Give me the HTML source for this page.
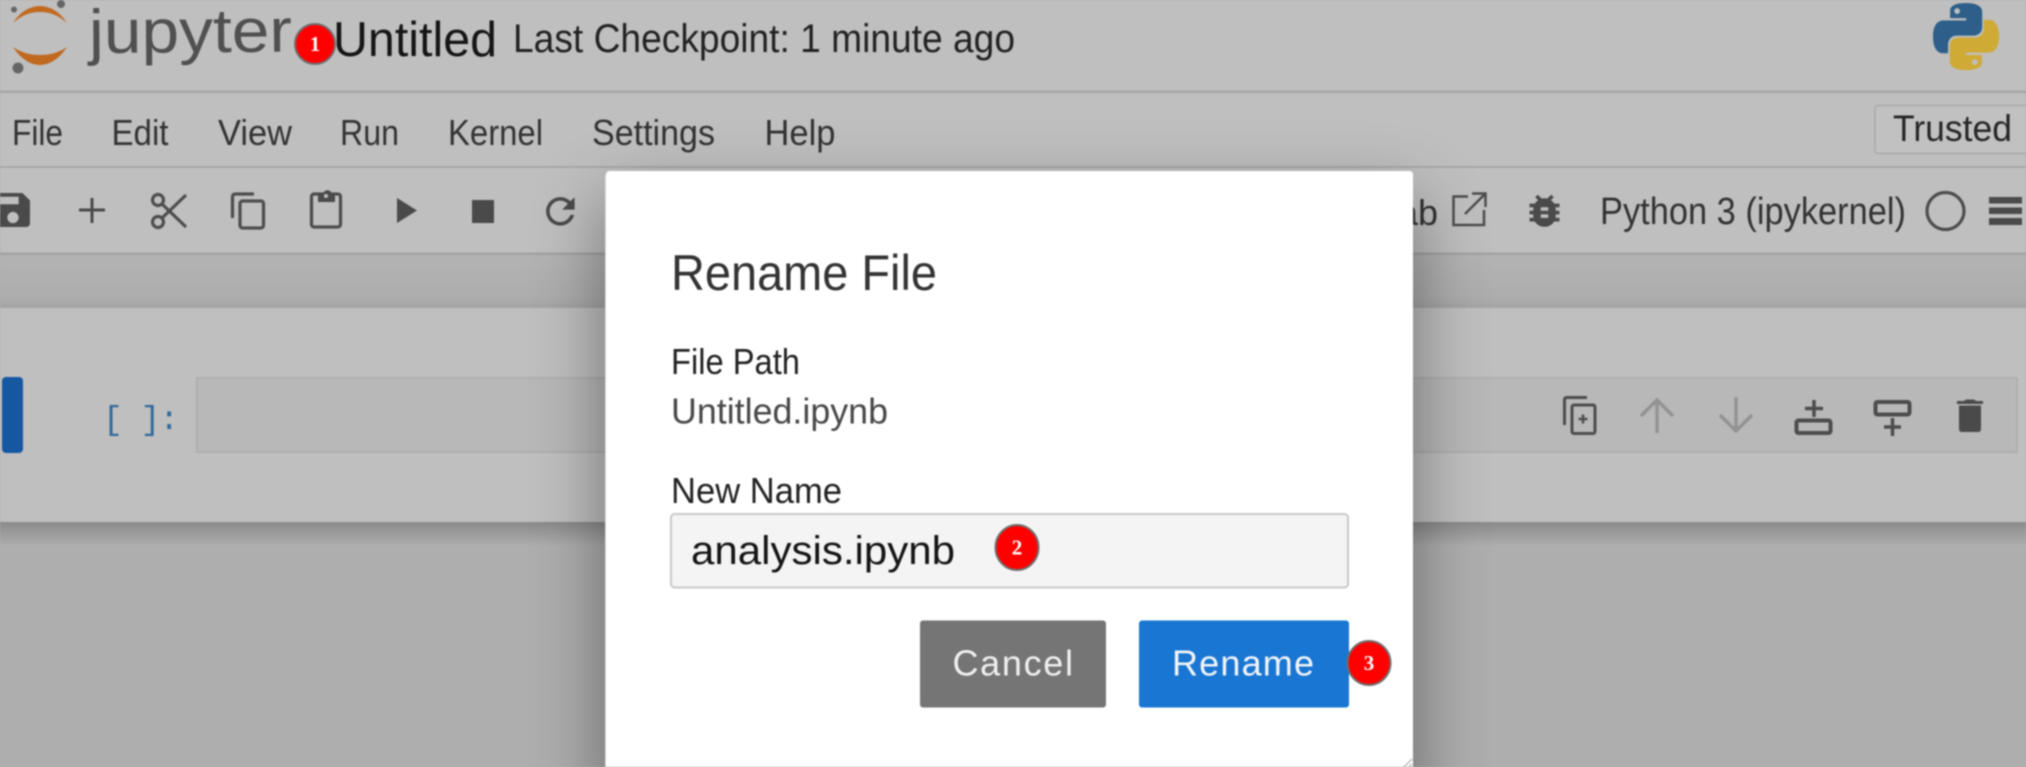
<!DOCTYPE html>
<html>
<head>
<meta charset="utf-8">
<title>Rename File</title>
<style>
html,body{margin:0;padding:0;width:2026px;height:767px;overflow:hidden;background:#aeaeae}
svg{display:block;position:absolute;left:0;top:0;filter:blur(.85px)}
text{font-family:"Liberation Sans",sans-serif}
.m{font-family:"Liberation Mono",monospace}
</style>
</head>
<body>
<svg width="2026" height="767" viewBox="0 0 2026 767" xmlns="http://www.w3.org/2000/svg">
<defs>
<linearGradient id="gap" x1="0" y1="0" x2="0" y2="1"><stop offset="0" stop-color="#b3b3b3"/><stop offset=".8" stop-color="#adadad"/><stop offset="1" stop-color="#a4a4a4"/></linearGradient>
<linearGradient id="under" x1="0" y1="0" x2="0" y2="1"><stop offset="0" stop-color="#8a8a8a"/><stop offset="1" stop-color="#aeaeae"/></linearGradient>
</defs>
<rect width="2026" height="767" fill="#aeaeae"/>
<rect width="2026" height="254" fill="#bfbfbf"/>
<rect y="90.5" width="2026" height="2.5" fill="#a6a6a6"/>
<rect y="166" width="2026" height="2" fill="#a9a9a9"/>
<rect y="252.5" width="2026" height="3" fill="#a3a3a3"/>
<rect y="255" width="2026" height="53" fill="url(#gap)"/>
<rect y="308" width="2026" height="214" fill="#bfbfbf"/>
<rect y="522" width="2026" height="24" fill="url(#under)"/>

<!-- jupyter logo -->
<path d="M13 23C20 12 30 6 40 6S60 12 67 23C58 15 50 12 40 12S22 15 13 23Z" fill="#c0691f"/>
<path d="M13 47C20 58 30 65 40 65S60 58 67 47C58 53 50 55 40 55S22 53 13 47Z" fill="#c0691f"/>
<circle cx="61" cy="4" r="4" fill="#666"/><circle cx="14" cy="9.500" r="3" fill="#666"/><circle cx="18" cy="68" r="5.500" fill="#666"/>
<text x="89" y="53" font-size="62" fill="#505050" textLength="203" lengthAdjust="spacingAndGlyphs" transform="rotate(-.4 89 53)">jupyter</text>

<text x="333" y="56" font-size="49" fill="#151515" textLength="164" lengthAdjust="spacingAndGlyphs">Untitled</text>
<text x="513" y="52" font-size="40" fill="#222" textLength="502" lengthAdjust="spacingAndGlyphs">Last Checkpoint: 1 minute ago</text>

<!-- Python logo -->
<g transform="translate(1933 3) scale(.6 .61)">
<path fill="#2d5f8a" d="M54.900 0C26.900 0 28.600 12.200 28.600 12.200l0 12.600h26.700v3.800H18S0 26.500 0 55c0 28.400 15.700 27.400 15.700 27.400h9.400V69.200s-.5-15.700 15.400-15.700h26.600s14.900.2 14.900-14.400V14.900S84.600 0 54.900 0zM40.200 8.400a4.800 4.800 0 1 1 0 9.600 4.800 4.800 0 0 1 0-9.600z"/>
<path fill="#cfaa35" transform="rotate(180 55 55)" d="M54.900 0C26.900 0 28.600 12.200 28.600 12.200l0 12.600h26.700v3.800H18S0 26.500 0 55c0 28.400 15.700 27.400 15.700 27.400h9.400V69.200s-.5-15.700 15.400-15.700h26.600s14.900.2 14.900-14.400V14.900S84.600 0 54.900 0zM40.200 8.400a4.800 4.800 0 1 1 0 9.600 4.800 4.800 0 0 1 0-9.600z"/>
</g>

<!-- Menu -->
<g font-size="36" fill="#333">
<text x="12" y="145" textLength="51" lengthAdjust="spacingAndGlyphs">File</text>
<text x="111.500" y="145" textLength="57" lengthAdjust="spacingAndGlyphs">Edit</text>
<text x="218" y="145" textLength="74" lengthAdjust="spacingAndGlyphs">View</text>
<text x="340" y="145" textLength="59" lengthAdjust="spacingAndGlyphs">Run</text>
<text x="448" y="145" textLength="95" lengthAdjust="spacingAndGlyphs">Kernel</text>
<text x="592" y="145" textLength="123" lengthAdjust="spacingAndGlyphs">Settings</text>
<text x="764.500" y="145" textLength="71" lengthAdjust="spacingAndGlyphs">Help</text>
</g>
<rect x="1875" y="105.500" width="170" height="48" rx="3" fill="#c1c1c1" stroke="#a9a9a9" stroke-width="1.500"/>
<text x="1893" y="141" font-size="37" fill="#262626" textLength="119" lengthAdjust="spacingAndGlyphs">Trusted</text>

<!-- Toolbar icons -->
<g fill="#4a4a4a">
<g transform="translate(-9.700 187.300) scale(1.890)"><path d="M17 3H5a2 2 0 0 0-2 2v14a2 2 0 0 0 2 2h14c1.100 0 2-.9 2-2V7l-4-4zm-5 16c-1.660 0-3-1.340-3-3s1.340-3 3-3 3 1.340 3 3-1.340 3-3 3zm3-10H5V5h10v4z"/></g>
<path d="M90.500 198h3v10.500H105v3H93.500V223h-3V211.500H79v-3h11.500z"/>
<path d="M397 198l20 12.500L397 223z"/>
<rect x="472" y="200" width="22" height="23"/>
<g transform="translate(539 190) scale(1.780)"><path d="M17.650 6.350C16.200 4.900 14.210 4 12 4c-4.420 0-7.990 3.580-7.990 8s3.570 8 7.990 8c3.730 0 6.840-2.550 7.730-6h-2.080c-.82 2.330-3.040 4-5.650 4-3.310 0-6-2.690-6-6s2.690-6 6-6c1.660 0 3.140.69 4.220 1.780L13 11h7V4l-2.350 2.350z"/></g>
<g transform="translate(1522 189.400) scale(1.875 1.780)"><path d="M20 8h-2.810c-.45-.78-1.070-1.450-1.820-1.960L17 4.410 15.590 3l-2.170 2.170C12.960 5.060 12.490 5 12 5c-.49 0-.96.06-1.410.17L8.410 3 7 4.410l1.620 1.630C7.880 6.550 7.260 7.220 6.810 8H4v2h2.090c-.05.33-.09.66-.09 1v1H4v2h2v1c0 .34.04.67.09 1H4v2h2.810c1.040 1.790 2.970 3 5.190 3s4.150-1.210 5.190-3H20v-2h-2.090c.05-.33.09-.66.09-1v-1h2v-2h-2v-1c0-.34-.04-.67-.09-1H20V8zm-6 8h-4v-2h4v2zm0-4h-4v-2h4v2z"/></g>
<rect x="1989" y="197" width="33" height="6.500"/><rect x="1989" y="207.500" width="33" height="6.500"/><rect x="1989" y="218" width="33" height="7"/>
</g>
<g fill="none" stroke="#4d4d4d" stroke-width="3.200">
<circle cx="158" cy="200" r="5.500"/><circle cx="158" cy="222" r="5.500"/>
<path d="M162 204L186 227M162 218L186 195"/>
<path d="M232.500 218V197q0-3 3-3H254"/>
<rect x="240" y="201" width="23.500" height="27" rx="2.500"/>
<rect x="311.500" y="194" width="29" height="33" rx="2.500"/>
<circle cx="1945.500" cy="211" r="18.500"/>
<path stroke-width="2.500" d="M1468 196.500H1453.500V225H1484V210M1465 214L1486 193M1472 193.500H1485.500V207"/>
</g>
<path d="M318 194h5c1-5 8-5 9 0h3v8h-17z" fill="#4a4a4a"/>
<circle cx="326" cy="196" r="2" fill="#c0c0c0"/>

<text x="1398" y="225" font-size="36" fill="#333">ab</text>
<text x="1600" y="224" font-size="38" fill="#333" textLength="306" lengthAdjust="spacingAndGlyphs">Python 3 (ipykernel)</text>

<!-- Cell -->
<rect x="2" y="377" width="21" height="76" rx="4" fill="#1558a1"/>
<text class="m" x="103" y="429" font-size="33" fill="#30699a" textLength="76" xml:space="preserve">[ ]:</text>
<rect x="197" y="378" width="1820" height="74" fill="#b8b8b8" stroke="#afafaf" stroke-width="2"/>

<!-- Cell toolbar -->
<g fill="none" stroke="#4d4d4d" stroke-width="3">
<path d="M1564.500 425V400q0-2.500 2.500-2.500H1587"/>
<rect x="1572" y="405" width="23" height="28.500" rx="2"/>
<path stroke-width="2.500" d="M1583 414.500v9M1578.500 419h9"/>
<rect x="1796.500" y="420.500" width="34" height="12.500" rx="2" stroke-width="4"/>
<path stroke-width="3.500" d="M1814 400v17M1805 408.500h18"/>
<rect x="1875.500" y="402" width="34" height="12.500" rx="2" stroke-width="4"/>
<path stroke-width="3.500" d="M1892.500 418v18M1884 427h17"/>
</g>
<g fill="none" stroke="#939393" stroke-width="3.500">
<path d="M1657 433V400M1641 416L1657 400L1673 416"/>
<path d="M1736 397V431M1720 415L1736 431L1752 415"/>
</g>
<path d="M1959 405.500h22V429q0 3-3 3h-16q-3 0-3-3zM1957 401h7l2-1.500h8l2 1.500h7v3h-26z" fill="#4a4a4a"/>

<!-- Modal -->
<path d="M606 175q0-4 4-4H1409q4 0 4 4V800H606Z" fill="#fff" style="filter:drop-shadow(0 30px 36px rgba(0,0,0,.42))"/>
<rect x="605" y="175" width="1" height="592" fill="#d9d9d9"/>
<path d="M1404 767L1412 759M1409 767L1412 764" stroke="#bbb" stroke-width="1.500"/>

<text x="671" y="290" font-size="50" fill="#333" textLength="266" lengthAdjust="spacingAndGlyphs">Rename File</text>
<text x="671" y="374" font-size="36" fill="#222" textLength="129" lengthAdjust="spacingAndGlyphs">File Path</text>
<text x="671" y="423.500" font-size="36" fill="#484848" textLength="217" lengthAdjust="spacingAndGlyphs">Untitled.ipynb</text>
<text x="671" y="503" font-size="36" fill="#222" textLength="171" lengthAdjust="spacingAndGlyphs">New Name</text>
<rect x="671" y="514" width="677" height="73.500" rx="3.500" fill="#f4f4f4" stroke="#c9c9c9" stroke-width="2"/>
<text x="691" y="564" font-size="40" fill="#141414" textLength="264" lengthAdjust="spacingAndGlyphs">analysis.ipynb</text>

<rect x="920" y="620.500" width="186" height="87" rx="3" fill="#757575"/>
<text x="952.500" y="675.500" font-size="36" fill="#f0f0f0" textLength="120.500" lengthAdjust="spacing">Cancel</text>
<rect x="1139" y="620.500" width="210" height="87" rx="3" fill="#1976d2"/>
<text x="1172" y="675.500" font-size="36" fill="#f2f6fb" textLength="142" lengthAdjust="spacing">Rename</text>

<!-- Badges -->
<g fill="#f00" stroke="#6e6e6e" stroke-width="2">
<circle cx="315" cy="44" r="20"/>
<ellipse cx="1017" cy="547.500" rx="21.500" ry="22.500"/>
<ellipse cx="1369" cy="663" rx="21.500" ry="22"/>
</g>
<g fill="#fff" font-weight="bold" font-size="21" text-anchor="middle">
<text x="315" y="51" style="font-family:'Liberation Serif',serif">1</text>
<text x="1017" y="554.500" style="font-family:'Liberation Serif',serif">2</text>
<text x="1369" y="670" style="font-family:'Liberation Serif',serif">3</text>
</g>
</svg>
</body>
</html>
